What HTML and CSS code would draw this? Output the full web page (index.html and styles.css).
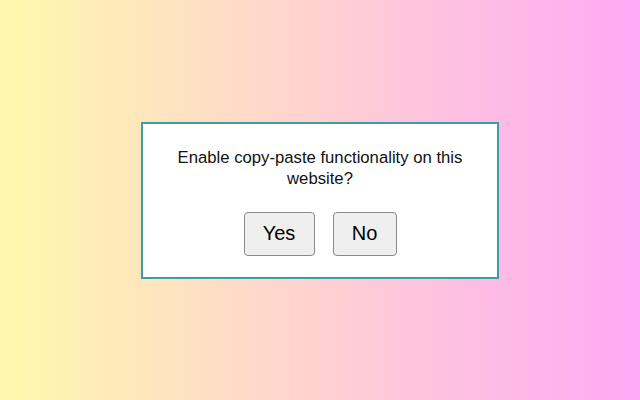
FILE: index.html
```html
<!DOCTYPE html>
<html>
<head>
  <title>Copy-paste permission</title>
  <link rel="stylesheet" href="styles.css">
</head>
<body>
  <div class="dialog">
    <p class="question">Enable copy-paste functionality on this website?</p>
    <div class="actions">
      <button class="btn">Yes</button>
      <button class="btn btn-no">No</button>
    </div>
  </div>
</body>
</html>
```

FILE: styles.css
```css
html, body {
  height: 100%;
  margin: 0;
  padding: 0;
}
body {
  display: flex;
  align-items: center;
  justify-content: center;
  font-family: "Liberation Sans", Arial, sans-serif;
  background: linear-gradient(to right, #fff8ac, #fea9f6);
}
.dialog {
  box-sizing: border-box;
  width: 358px;
  padding: 23px 26px 21px;
  background-color: #fff;
  border: 2px solid #3a9ea6;
  text-align: center;
}
.question {
  margin: 0 0 23px;
  font-size: 16.7px;
  line-height: 21px;
  color: #111;
}
.actions {
  display: flex;
  justify-content: center;
  gap: 18px;
}
.btn {
  width: 71px;
  height: 44px;
  padding: 0;
  font-family: "Liberation Sans", Arial, sans-serif;
  font-size: 20px;
  color: #000;
  background-color: #efefef;
  border: 1px solid #8a8a8a;
  border-radius: 4px;
}
.btn-no {
  width: 64px;
}
```
